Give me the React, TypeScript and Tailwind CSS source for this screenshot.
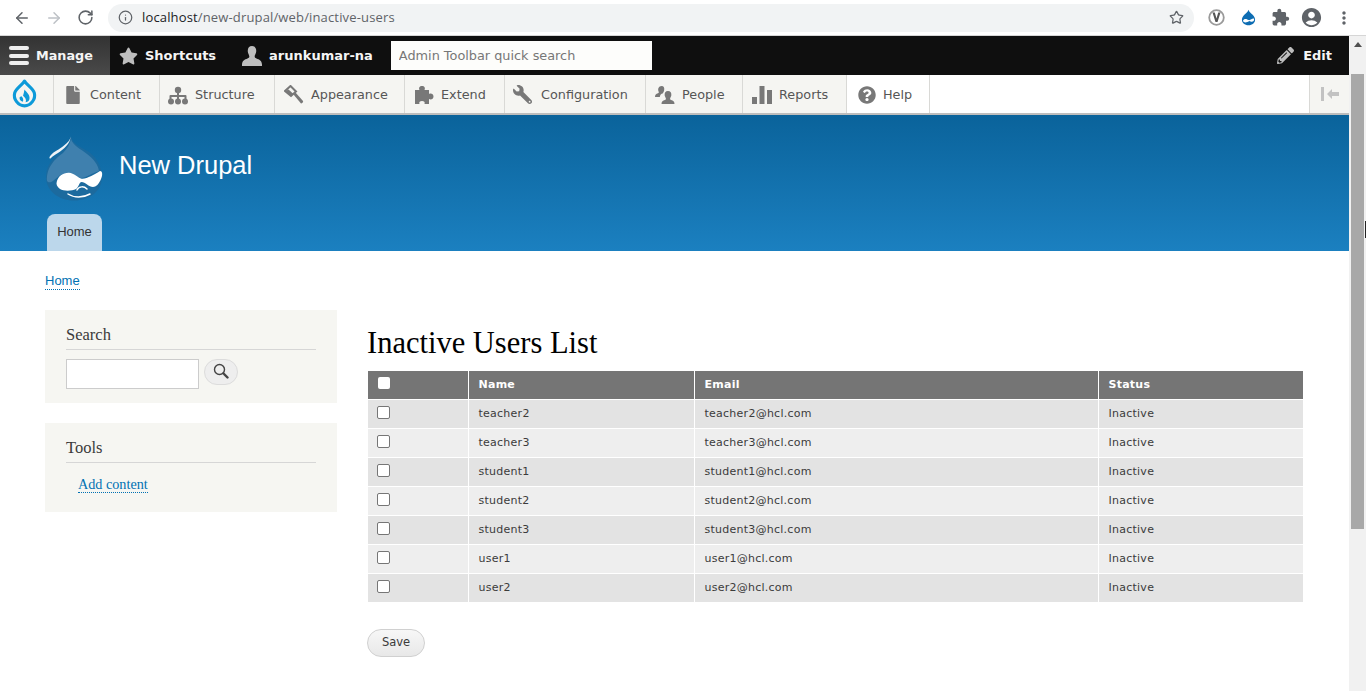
import { ArrowLeft, ArrowRight, RotateCw, Info, Star } from 'lucide-react';
import { MdExtension, MdAccountCircle, MdMoreVert } from 'react-icons/md';
import { FaFile, FaWrench, FaQuestionCircle, FaStar, FaPencilAlt } from 'react-icons/fa';

const DROP = 'M12 1c.6 3.4 4 5.2 6 7.2 2.300 2.200 3.500 4.600 3.500 7.300C21.500 20 17.500 23.500 12 23.500S2.500 20 2.500 15.500c0-2.700 1.200-5.100 3.500-7.300C8 6.200 11.400 4.400 12 1z';

function DrupalMark() {
  return (
    <svg className="w-[27px] h-[32px]" viewBox="0 0 24 26" fill="none">
      <path d="M12 1.500c1.500 3 7.500 6.500 8.700 10.500 1.500 5.500-3 11.500-8.700 11.500S1.800 17.500 3.300 12C4.500 8 10.500 4.500 12 1.500z" stroke="#0d9ad9" strokeWidth="2.800" strokeLinejoin="round" />
      <path d="M12 9c1.500 2.300 4.500 4 4.500 7.500a4 4 0 0 1-3.500 3.800c1-2.300-.3-4-2.300-5.800.5-1.800 1-3.500 1.300-5.500z" fill="#0d9ad9" />
      <path d="M9.300 15c1.500 1.300 2 3 1.200 4.800-2.200-.5-3.300-2.500-2.800-4 .2-.4 1-.4 1.600-.8z" fill="#0d9ad9" />
    </svg>
  );
}

function DrupliconLarge() {
  return (
    <svg className="w-[58px] h-[65px]" viewBox="0 0 58 65" fill="none">
      <path d="M26 0C27 8 36 11 44 16 52 22 57 31 57 41 57 55 45 64.500 29 64.500 13 64.500 1 54 1 41 1 27 11 20 17 15 21 11 25 7 26 0z" fill="#1c6a9e" />
      <path d="M26 3C28 10 36 13 42 18 49 23 53 29 54 35 47 37 41 42 36 42 28 40 21 35 14 40 10 43 5 49 2 45 1 31 11 22 18 17 22 13 25 8 26 3z" fill="#3f80ae" />
      <path d="M25.700 0.500C25 8 19 13 13 17 10 19 8 20 5.500 22.500 4 23 4 21 6 19 9 15 14 14 19 9.500 23 6.500 25 4 25.700 0.500z" fill="#eef3f7" />
      <path d="M11.700 46C13 40 18 36.500 24 36.700 29 37 33 42 36.700 42.700 41 43.500 50 38 55 35 58 35 57.500 40 56 43 54 48 51 51 48 51 44 51 40 46 36.700 46 34 46 34 51 31 53 27 55 19 55.500 15 53 12 51 11 48 11.700 46z" fill="#fff" />
      <path d="M32 54C34 50 39 50 42 53" stroke="#fff" strokeWidth="1.500" strokeLinecap="round" />
      <path d="M23 58C29 62 38 62 45 58" stroke="#fff" strokeWidth="1.500" strokeLinecap="round" />
    </svg>
  );
}

function TrayIcon({ name }: { name: string }) {
  const cls = 'w-[20px] h-[20px] text-[#787878]';
  if (name === 'file') return <FaFile className="w-[14px] h-[18px] text-[#787878]" />;
  if (name === 'sitemap')
    return (
      <svg className={cls} viewBox="0 0 20 20" fill="#787878">
        <circle cx="10" cy="5" r="3.200" />
        <circle cx="3" cy="16.500" r="3" />
        <circle cx="10" cy="16.500" r="3" />
        <circle cx="17" cy="16.500" r="3" />
        <path d="M9 6h2v4h6.500a1 1 0 0 1 1 1v5h-2v-4H11v4H9v-4H3.500v4h-2v-5a1 1 0 0 1 1-1H9z" />
      </svg>
    );
  if (name === 'wrench') return <FaWrench className="w-[19px] h-[19px] text-[#787878] -scale-x-100" />;
  if (name === 'help') return <FaQuestionCircle className="w-[18px] h-[18px] text-[#787878]" />;
  if (name === 'hammer')
    return (
      <svg className={cls} viewBox="0 0 20 20" fill="#787878">
        <path d="M6.500 1 12 6.500 7 11 1 6z" fill="none" stroke="#787878" strokeWidth="2" />
        <path d="M4.500 4.500 9.500 9 7 11 1.500 6z" />
        <path d="m9.500 9.500 2-2 7.500 8.500c.7.900-1.300 3-2.200 2.200z" />
      </svg>
    );
  if (name === 'puzzle')
    return (
      <svg className={cls} viewBox="0 0 20 20" fill="#787878">
        <path d="M1 5h4.500C4.500 3 5.500 1 8 1s3.500 2 2.500 4H15v4c2-1 4.500 0 4.500 2.500S17 15 15 14v5h-4.500c.8-2-.5-3-2.500-3s-3.300 1-2.500 3H1z" />
      </svg>
    );
  if (name === 'people')
    return (
      <svg className={cls} viewBox="0 0 20 20" fill="#787878">
        <path d="M6.500 1C9 1 9.500 3 9.200 5 9 6.500 8.200 7.500 8 8.200c-2 .6-3 1.800-3.200 3.800H0c0-2.500 1-3 3-3.700.6-.3 1-.8.700-1.500C3 5.500 3 4 3.500 3c.5-1.300 1.700-2 3-2z" />
        <path d="M13 6c2.500 0 3.700 2 3.300 4.500-.2 1.200-.9 2-1.200 3-.1.800.3 1.200 1 1.500 2 .7 3.400 1.300 3.400 4H6.500c0-2.700 1.400-3.300 3.400-4 .7-.3 1.100-.7 1-1.500-.3-1-1-1.800-1.200-3C9.300 8 10.500 6 13 6z" />
      </svg>
    );
  return (
    <svg className={cls} viewBox="0 0 20 20" fill="#787878">
      <path d="M0 12h5v7H0zM7.500 1h5v18h-5zM15 5h5v14h-5z" />
    </svg>
  );
}

const trayItems = [
  { label: 'Content', icon: 'file', w: 'w-[106px]', gap: 'gap-[10px]', pl: 'pl-[12px]' },
  { label: 'Structure', icon: 'sitemap', w: 'w-[115px]', gap: 'gap-[7px]', pl: 'pl-[8px]' },
  { label: 'Appearance', icon: 'hammer', w: 'w-[130px]', gap: 'gap-[7px]', pl: 'pl-[9px]' },
  { label: 'Extend', icon: 'puzzle', w: 'w-[100px]', gap: 'gap-[7px]', pl: 'pl-[9px]' },
  { label: 'Configuration', icon: 'wrench', w: 'w-[141px]', gap: 'gap-[9px]', pl: 'pl-[8px]' },
  { label: 'People', icon: 'people', w: 'w-[97px]', gap: 'gap-[7px]', pl: 'pl-[9px]' },
  { label: 'Reports', icon: 'bars', w: 'w-[104px]', gap: 'gap-[7px]', pl: 'pl-[9px]' },
];

const users = [
  ['teacher2', 'teacher2@hcl.com'],
  ['teacher3', 'teacher3@hcl.com'],
  ['student1', 'student1@hcl.com'],
  ['student2', 'student2@hcl.com'],
  ['student3', 'student3@hcl.com'],
  ['user1', 'user1@hcl.com'],
  ['user2', 'user2@hcl.com'],
];

function ChromeBar() {
  return (
    <div className="h-[36px] bg-white border-b border-[#d6d6d6] flex items-center font-['Open_Sans',sans-serif]">
      <div className="w-[108px] flex items-center pl-[13px] gap-[14px] text-[#5f6368]">
        <ArrowLeft className="w-[18px] h-[18px]" strokeWidth={2} />
        <ArrowRight className="w-[18px] h-[18px] text-[#bdc1c6]" strokeWidth={2} />
        <RotateCw className="w-[17px] h-[17px]" strokeWidth={2.200} />
      </div>
      <div className="w-[1086px] h-[28px] rounded-full bg-[#f1f3f4] flex items-center pl-[10px] pr-[10px]">
        <Info className="w-[15px] h-[15px] text-[#5f6368]" strokeWidth={2} />
        <span className="ml-[9px] text-[13px] tracking-[0.15px] text-[#5f6368]">
          <span className="text-[#202124]">localhost</span>/new-drupal/web/inactive-users
        </span>
        <Star className="ml-auto w-[15px] h-[15px] text-[#5f6368]" strokeWidth={2} />
      </div>
      <div className="flex items-center ml-[14px] text-[#5f6368]">
        <svg className="w-[17px] h-[17px]" viewBox="0 0 17 17" fill="none">
          <circle cx="8.500" cy="8.500" r="7.300" stroke="#9a9a9a" strokeWidth="1.800" />
          <path d="M4.500 3.500h2.300l1.700 6 1.700-6h2.300l-3 9.500H7.500z" fill="#555" />
        </svg>
        <svg className="w-[17px] h-[18px] ml-[15px]" viewBox="0 0 24 26">
          <path d={DROP} fill="#0e6db3" />
          <path d="M4 17c3-4 5-2 8-1s5-3 8-2c1 4-3 5-5 4s-2-1-3 0-7 3-8-1z" fill="#fff" />
        </svg>
        <MdExtension className="w-[19px] h-[19px] ml-[14px] text-[#5f6368]" />
        <MdAccountCircle className="w-[23px] h-[23px] ml-[10px] text-[#5f6368]" />
        <MdMoreVert className="w-[20px] h-[20px] ml-[11px] text-[#5f6368]" />
      </div>
    </div>
  );
}

function AdminToolbar() {
  return (
    <div className="font-['DejaVu_Sans',sans-serif]">
      <div className="h-[39px] bg-[#0f0f0f] flex items-center text-[13px] font-bold text-[#f5f5f5]">
        <div className="w-[110px] h-full bg-gradient-to-b from-[#333] to-[#4a4a4a] flex items-center pl-[9px] gap-[7px] text-[12.800px]">
          <div className="flex flex-col gap-[3.500px]">
            <div className="w-[20px] h-[4px] rounded-full bg-[#eee]" />
            <div className="w-[20px] h-[4px] rounded-full bg-[#eee]" />
            <div className="w-[20px] h-[4px] rounded-full bg-[#eee]" />
          </div>
          Manage
        </div>
        <div className="flex items-center pl-[9px] gap-[7px]">
          <FaStar className="w-[19px] h-[18px] text-[#bebebe]" />
          Shortcuts
        </div>
        <div className="flex items-center ml-[26px] gap-[7px]">
          <svg className="w-[20px] h-[20px]" viewBox="0 0 20 20" fill="#bebebe">
            <path d="M10 0c3 0 4.500 2.300 4.200 5.500-.2 2-1.300 3.300-1.500 4.700-.1 1.100.5 1.700 1.800 2.200 2.700 1 5.300 2 5.500 6v1.600H0V18.400c.2-4 2.800-5 5.500-6 1.300-.5 1.900-1.100 1.800-2.200-.2-1.400-1.300-2.700-1.500-4.700C5.500 2.300 7 0 10 0z" />
          </svg>
          arunkumar-na
        </div>
        <input
          readOnly
          placeholder="Admin Toolbar quick search"
          className="ml-[18px] w-[261px] h-[29px] bg-[#fdfdfb] px-[8px] text-[12.850px] font-normal text-[#777] placeholder:text-[#777] outline-none"
        />
        <div className="ml-auto mr-[17px] flex items-center gap-[9px]">
          <FaPencilAlt className="w-[17px] h-[17px] text-[#bebebe]" />
          Edit
        </div>
      </div>
      <div className="h-[40px] bg-white flex border-b-2 border-[#bdbdbd] text-[12.800px] text-[#565656]">
        <div className="w-[54px] h-full bg-[#f5f5f2] border-r border-[#d9d9d6] flex items-center justify-center pr-[4px]">
          <DrupalMark />
        </div>
        {trayItems.map((item) => (
          <div key={item.label} className={`${item.w} ${item.gap} ${item.pl} h-full pt-[1px] bg-[#f5f5f2] border-r border-[#d9d9d6] flex items-center`}>
            <TrayIcon name={item.icon} />
            {item.label}
          </div>
        ))}
        <div className="w-[83px] h-full pt-[1px] bg-white border-r border-[#d9d9d6] flex items-center pl-[11px] gap-[7px]">
          <TrayIcon name="help" />
          Help
        </div>
        <div className="ml-auto w-[40px] h-full bg-[#f5f5f2] border-l border-[#d9d9d6] flex items-center justify-center">
          <svg className="w-[20px] h-[16px]" viewBox="0 0 20 16" fill="#c2c2c2">
            <path d="M1 1h3v14H1zM7 8l5-5v3h7v4h-7v3z" />
          </svg>
        </div>
      </div>
    </div>
  );
}

function SideBlock({ title, children, className }: { title: string; children: React.ReactNode; className: string }) {
  return (
    <div className={`bg-[#f6f6f2] px-[21px] pt-[15px] ${className}`}>
      <h2 className="font-['Liberation_Serif',serif] text-[16.500px] leading-[20px] text-[#3b3b3b] pb-[4px] border-b border-[#d6d6d6]">
        {title}
      </h2>
      {children}
    </div>
  );
}

export default function App() {
  return (
    <div className="relative h-[691px] overflow-hidden bg-white">
      <ChromeBar />
      <div className="flex h-[655px]">
        <div className="w-[1349px] min-w-0">
          <AdminToolbar />
          <header className="h-[136px] bg-gradient-to-b from-[#0a639b] to-[#1b80c0] pl-[45px] pt-[21px] font-['Liberation_Sans',sans-serif]">
            <div className="flex items-start">
              <DrupliconLarge />
              <span className="ml-[16px] mt-[11px] text-[25.500px] leading-[36px] text-white">New Drupal</span>
            </div>
            <div className="ml-[2px] mt-[13px] pb-[1px] w-[55px] h-[37px] rounded-t-[8px] bg-[#bcd7eb] flex items-center justify-center text-[13px] text-[#333]">
              Home
            </div>
          </header>
          <div className="pl-[45px] pt-[17px] font-['Liberation_Sans',sans-serif]">
            <a className="inline-block text-[13px] leading-[16px] text-[#0071b3] border-b border-dotted border-[#0071b3]">Home</a>
            <div className="flex mt-[18px]">
              <aside className="w-[292px] shrink-0">
                <SideBlock title="Search" className="h-[93px]">
                  <div className="flex items-start mt-[9px]">
                    <input readOnly className="w-[133px] h-[30px] bg-white border border-[#ccc]" />
                    <button className="ml-[5px] w-[34px] h-[26px] rounded-full bg-[#eee] border border-[#dcdcdc] flex items-center justify-center">
                      <svg className="w-[16px] h-[16px] -mt-[2px]" viewBox="0 0 16 16" fill="none">
                        <circle cx="6.500" cy="6.500" r="5" stroke="#444" strokeWidth="1.400" />
                        <path d="m10.500 10.500 4 4" stroke="#444" strokeWidth="2.400" strokeLinecap="round" />
                      </svg>
                    </button>
                  </div>
                </SideBlock>
                <SideBlock title="Tools" className="h-[89px] mt-[20px]">
                  <div className="mt-[9px] ml-[12px]">
                    <a className="inline-block font-['Liberation_Serif',serif] text-[14.200px] leading-[15px] text-[#0071b3] border-b border-dotted border-[#0071b3]">Add content</a>
                  </div>
                </SideBlock>
              </aside>
              <main className="ml-[30px] w-[936px]">
                <h1 className="mt-[15px] font-['Liberation_Serif',serif] text-[30.500px] leading-[36px] text-black">Inactive Users List</h1>
                <table className="mt-[10px] ml-[1px] w-[935px] table-fixed border-collapse font-['DejaVu_Sans',sans-serif] text-[11px] tracking-[0.25px] text-[#3b3b3b]">
                  <colgroup>
                    <col className="w-[100px]" />
                    <col className="w-[226px]" />
                    <col className="w-[404px]" />
                    <col />
                  </colgroup>
                  <thead>
                    <tr className="h-[28px] bg-[#757575] text-white text-left font-bold">
                      <th className="border-r border-white pl-[10px]">
                        <div className="w-[12px] h-[12px] rounded-[2px] bg-white -mt-[3px]" />
                      </th>
                      <th className="border-r border-white pl-[10px]">Name</th>
                      <th className="border-r border-white pl-[10px]">Email</th>
                      <th className="pl-[10px]">Status</th>
                    </tr>
                  </thead>
                  <tbody>
                    {users.map(([name, email], i) => (
                      <tr key={name} className={`h-[29px] border-t border-white ${i % 2 === 0 ? 'bg-[#e3e3e3]' : 'bg-[#eeeeee]'}`}>
                        <td className="border-r border-white pl-[9px]">
                          <div className="w-[13px] h-[13px] rounded-[2px] bg-white border border-[#767676] -mt-[3px]" />
                        </td>
                        <td className="border-r border-white pl-[10px] pt-[1px]">{name}</td>
                        <td className="border-r border-white pl-[10px] pt-[1px]">{email}</td>
                        <td className="pl-[10px] pt-[1px]">Inactive</td>
                      </tr>
                    ))}
                  </tbody>
                </table>
                <button className="mt-[27px] w-[58px] h-[28px] rounded-full bg-gradient-to-b from-[#f7f7f7] to-[#e8e8e8] border border-[#d0d0d0] font-['DejaVu_Sans',sans-serif] text-[11.500px] text-[#3a3a3a]">
                  Save
                </button>
              </main>
            </div>
          </div>
        </div>
        <div className="relative w-[17px] h-full bg-[#f1f1f1]">
          <div className="absolute left-[5px] top-[6px] w-0 h-0 border-x-[4px] border-x-transparent border-b-[5px] border-b-[#505050]" />
          <div className="absolute left-[2px] right-[2px] top-[38px] h-[455px] bg-[#a8a8a8]" />
          {/* mouse cursor caught at the window edge */}
          <div className="absolute right-0 top-[185px] w-[1px] h-[17px] bg-[#222]" />
        </div>
      </div>
    </div>
  );
}
